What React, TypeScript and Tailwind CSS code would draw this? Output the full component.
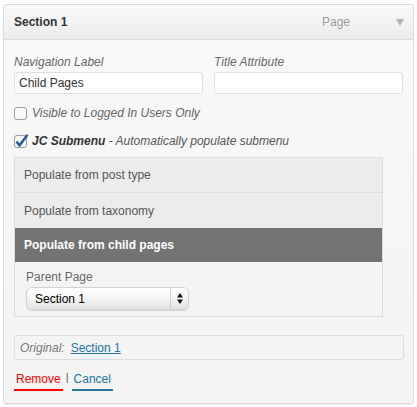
import React from 'react';

const font = { fontFamily: '"Liberation Sans", Arial, sans-serif' };

const Checkbox = ({ checked }: { checked?: boolean }) => (
  <svg width="15" height="15" viewBox="0 0 15 15" className="shrink-0">
    <rect x="0.5" y="1.5" width="12" height="12" rx="2.5" fill="#fafafa" stroke="#9a9a9a" />
    {checked && (
      <path d="M2.5 7.5 L5.5 11.5 L13.5 0.8" fill="none" stroke="#2a5e9c" strokeWidth="2.6" strokeLinejoin="round" />
    )}
  </svg>
);

export default function App() {
  return (
    <div className="w-[417px] h-[407px] bg-white pt-[4px] pl-[3px]" style={font}>
      <div className="w-[411px] h-[400px] border border-[#dcdcdc] rounded-[3px] bg-gradient-to-b from-[#f9f9f9] to-[#f3f3f3] shadow-[0_1px_1px_rgba(0,0,0,0.06)] overflow-hidden">
        {/* Header */}
        <div className="h-[35px] flex items-center justify-between pl-[10px] pr-[9px] bg-gradient-to-b from-[#f9f9f9] to-[#ececec] border-b border-[#dcdcdc]">
          <span className="text-[12px] font-bold text-[#333]">Section 1</span>
          <div className="flex items-center gap-[46px]">
            <span className="text-[12px] text-[#999]">Page</span>
            <svg width="8" height="7" viewBox="0 0 8 7"><path d="M0 0 H8 L4 7 Z" fill="#b3b3b3" /></svg>
          </div>
        </div>

        {/* Body */}
        <div className="pl-[10px] pr-[9px] pt-[14px]">
          <div className="flex gap-[11px]">
            <div className="w-[189px]">
              <div className="text-[12px] italic text-[#666] leading-[16px]">Navigation Label</div>
              <div className="mt-[2px] h-[22px] border border-[#dfdfdf] rounded-[3px] bg-white flex items-center pl-[4px] text-[12px] text-[#333]">Child Pages</div>
            </div>
            <div className="w-[189px]">
              <div className="text-[12px] italic text-[#666] leading-[16px]">Title Attribute</div>
              <div className="mt-[2px] h-[22px] border border-[#dfdfdf] rounded-[3px] bg-white" />
            </div>
          </div>

          <div className="mt-[11px] flex items-center gap-[3px] h-[16px]">
            <Checkbox />
            <span className="text-[12px] italic text-[#666]">Visible to Logged In Users Only</span>
          </div>

          <div className="mt-[12px] flex items-center gap-[3px] h-[16px]">
            <Checkbox checked />
            <span className="text-[12px] italic text-[#555]">
              <b className="text-[#333]">JC Submenu</b> - Automatically populate submenu
            </span>
          </div>

          {/* Populate panel */}
          <div className="mt-[8px] w-[369px] border border-[#dcdcdc] bg-[#f4f4f4]">
            <div className="h-[35px] flex items-center pl-[9px] bg-[#ececec] border-b border-[#dcdcdc] text-[12px] text-[#555]">Populate from post type</div>
            <div className="h-[35px] flex items-center pl-[9px] bg-[#ececec] text-[12px] text-[#555]">Populate from taxonomy</div>
            <div className="h-[34px] flex items-center pl-[9px] bg-[#737373] text-[12px] font-bold text-white">Populate from child pages</div>
            <div className="pl-[11px] pt-[7px] pb-[6px]">
              <div className="text-[12px] text-[#666] leading-[16px]">Parent Page</div>
              <div className="mt-[2px] w-[163px] h-[23px] rounded-[6px] border border-[#d2d2d2] bg-gradient-to-b from-[#ffffff] via-[#f4f4f4] to-[#e3e3e3] shadow-[0_1px_1px_rgba(0,0,0,0.12)] flex items-center">
                <span className="flex-1 pl-[8px] text-[12px] text-black">Section 1</span>
                <div className="w-[18px] h-full border-l border-[#cfcfcf] flex items-center justify-center">
                  <svg width="6" height="11" viewBox="0 0 6 11">
                    <path d="M0 4.5 L3 0 L6 4.5 Z M0 6.5 L3 11 L6 6.5 Z" fill="#111" />
                  </svg>
                </div>
              </div>
            </div>
          </div>

          {/* Original */}
          <div className="mt-[18px] h-[25px] w-[390px] border border-[#dcdcdc] rounded-[3px] flex items-center pl-[5px] text-[12px]">
            <span className="italic text-[#777]">Original:</span>
            <span className="ml-[6px] text-[#21759b] underline">Section 1</span>
          </div>

          {/* Actions */}
          <div className="mt-[11px] flex items-start text-[12px]">
            <span className="text-[#f00] border-b-2 border-[#f00] pb-[2px] px-[2px] leading-[16px]">Remove</span>
            <span className="mx-[3px] text-[#555] text-[11px] leading-[12px]">|</span>
            <span className="text-[#21759b] border-b-2 border-[#21759b] pb-[2px] px-[2px] leading-[16px]">Cancel</span>
          </div>
        </div>
      </div>
    </div>
  );
}
